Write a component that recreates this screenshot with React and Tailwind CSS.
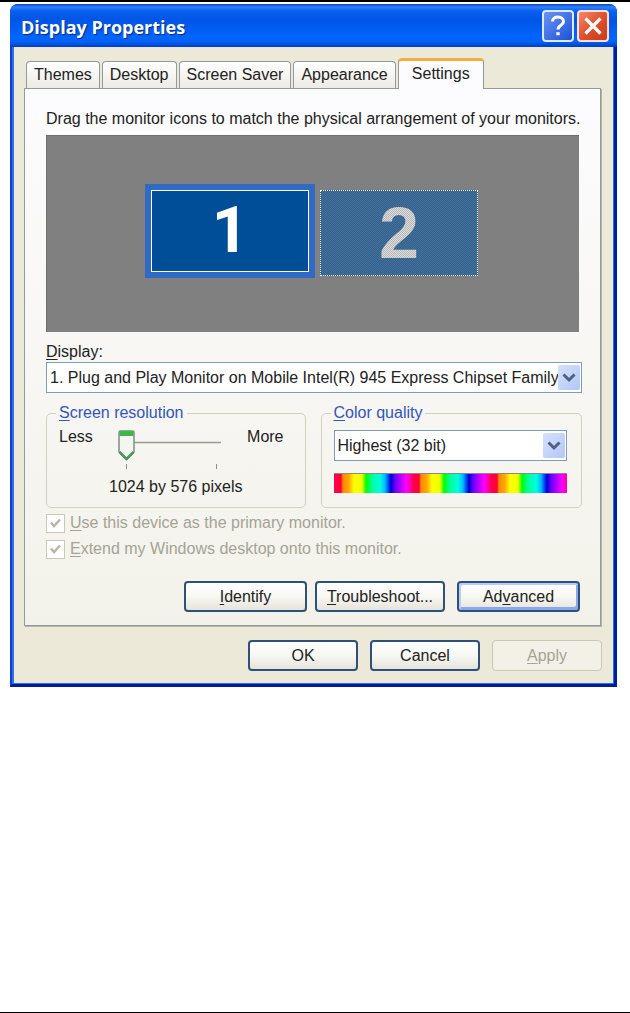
import React, { useState } from 'react'
import clsx from 'clsx'

const TABS = ['Themes', 'Desktop', 'Screen Saver', 'Appearance', 'Settings']

// Button / label text with its keyboard accelerator underlined.
function Accel({ text, at = 0 }) {
  return (
    <span>
      {text.slice(0, at)}
      <span className="underline underline-offset-2">{text[at]}</span>
      {text.slice(at + 1)}
    </span>
  )
}

function XpButton({ children, className, focused, disabled }) {
  return (
    <button
      type="button"
      disabled={disabled}
      className={clsx(
        'h-[31px] rounded-[4px] text-base leading-5',
        disabled
          ? 'border border-[#c9c7ba] bg-[#f3f1e7] text-[#a5a396]'
          : 'border-2 border-[#2f5078] bg-linear-to-b from-white via-[#f7f7f3] to-[#e6e4da] text-[#222]',
        focused && 'shadow-[inset_2px_2px_0_#bccdf5,inset_-2px_-3px_0_#8ba6ea]',
        className,
      )}
    >
      {children}
    </button>
  )
}

function XpSelect({ id, value, label, className }) {
  return (
    <div className={clsx('relative', className)}>
      <select
        id={id}
        aria-label={label}
        defaultValue={value}
        className="block h-[31px] w-full appearance-none border border-[#7f9db9] bg-white pl-[3px] pr-5 text-base text-[#222]"
      >
        <option>{value}</option>
      </select>
      <span className="pointer-events-none absolute right-[2px] top-[3px] flex h-[25px] w-[22px] items-center justify-center rounded-[2px] bg-linear-to-br from-[#d5e1fd] to-[#b3c7f5]">
        <svg width="14" height="10" viewBox="0 0 14 10" fill="none" stroke="#4d6185" strokeWidth="3">
          <path d="M1.500 1.500 7 7l5.500-5.500" />
        </svg>
      </span>
    </div>
  )
}

function XpCheckbox({ id, text }) {
  return (
    <div className="flex h-[26px] items-center gap-[5px]">
      <span className="relative h-[19px] w-[19px]">
        <input
          id={id}
          type="checkbox"
          defaultChecked
          disabled
          className="block h-[19px] w-[19px] appearance-none border border-[#cac8bb] bg-white"
        />
        <svg className="pointer-events-none absolute left-1 top-1" width="11" height="11" viewBox="0 0 11 11" fill="none" stroke="#b9b7aa" strokeWidth="2.500">
          <path d="M1 4.500 4 8l6-6.500" />
        </svg>
      </span>
      <label htmlFor={id} className="text-base leading-5 text-[#a5a396]">
        <Accel text={text} />
      </label>
    </div>
  )
}

function ResolutionSlider() {
  const [res, setRes] = useState(0)
  return (
    <div className="relative mt-1 h-[46px] w-[108px]">
      <input
        type="range"
        min="0"
        max="1"
        value={res}
        onChange={(e) => setRes(Number(e.target.value))}
        aria-label="Screen resolution"
        className="absolute inset-0 h-8 w-full opacity-0"
      />
      <svg className="pointer-events-none block" width="108" height="46" viewBox="0 0 108 46" fill="none">
        <path d="M6 13.500h99" stroke="#9d9c94" strokeWidth="1.500" />
        <path d="M10.500 35v5M100.500 35v5" stroke="#8d8c84" />
        <g transform={`translate(${2 + res * 90} 1)`}>
          <path d="M1 2.500q0-1.500 1.500-1.500h12q1.500 0 1.500 1.500V22L8.500 29.500 1 22z" fill="#f4f5f0" stroke="#7c8f88" strokeWidth="1.500" />
          <path d="M1.500 1h14v5h-14z" fill="#3fb54a" />
          <path d="M1.500 22 8.500 29l7-7" stroke="#4d9468" strokeWidth="2.500" />
        </g>
      </svg>
    </div>
  )
}

function Monitors() {
  return (
    <div className="mt-[6px] flex h-[197px] gap-[5px] border-l border-t border-[#6f6f6f] bg-[#808080] pl-[98px] pt-12">
      <div className="h-[94px] w-[170px] bg-[#316ac5] p-[6px]">
        <div className="flex h-full items-center justify-center border border-white bg-[#004e98] font-['Roboto'] font-bold text-white">
          <span className="text-[64px] leading-none">1</span>
        </div>
      </div>
      <div className="relative mt-[6px] flex h-[86px] w-[158px] items-center justify-center border border-dotted border-white bg-[#2a6299] font-bold text-[#dcdcdc]">
        <span className="text-[72px] leading-none">2</span>
        {/* every other pixel greyed out: this monitor is not in use */}
        <svg className="absolute inset-0 h-full w-full" shapeRendering="crispEdges">
          <pattern id="dither" width="2" height="2" patternUnits="userSpaceOnUse">
            <path d="M0 0h1v1H0zM1 1h1v1H1z" fill="#808080" fillOpacity="0.4" />
          </pattern>
          <rect width="100%" height="100%" fill="url(#dither)" />
        </svg>
      </div>
    </div>
  )
}

function TitleBar() {
  return (
    <header className="flex h-[43px] items-center bg-[linear-gradient(#0a3fc0_0,#2f83ff_3px,#0a5ff0_7px,#0055e5_16px,#0066ff_34px,#0060f5_38px,#003dc4_43px)] pl-[11px] pr-2 pt-px">
      <h1 className="flex-1 pt-px font-['Open_Sans'] text-lg font-bold text-white [text-shadow:1px_1px_1px_#0a2a80]">Display Properties</h1>
      <button type="button" aria-label="Help" className="mr-[3px] flex h-8 w-8 items-center justify-center rounded-[4px] border-2 border-[#dfe9ff] bg-linear-to-br from-[#6b93f5] to-[#1c50d8]">
        <svg width="16" height="22" viewBox="0 0 16 22" fill="none" stroke="#fff" strokeWidth="3">
          <path d="M2.500 6.500C2.500 3.500 5 2 8 2s5.500 1.700 5.500 4.500c0 4-5.500 3.500-5.500 8" />
          <path d="M6.300 18.700h3.400" />
        </svg>
      </button>
      <button type="button" aria-label="Close" className="flex h-8 w-8 items-center justify-center rounded-[4px] border-2 border-[#ffe0d8] bg-linear-to-br from-[#f0896b] via-[#e0502c] to-[#c63c14]">
        <svg width="18" height="18" viewBox="0 0 18 18" stroke="#fff" strokeWidth="3.200">
          <path d="M1.500 1.500l15 15M16.500 1.500l-15 15" />
        </svg>
      </button>
    </header>
  )
}

export default function App() {
  return (
    <div className="flex min-h-screen flex-col border-b border-t-2 border-black bg-white pl-[10px] pr-[13px] pt-[2px] font-['Liberation_Sans',sans-serif] text-base leading-5 text-[#222]">
      <main className="overflow-hidden rounded-t-[8px] bg-[#0a3fd0]">
        <TitleBar />
        <div className="border-b-[3px] border-l-2 border-r-[3px] border-b-[#001c9c] border-l-[#0a3fd0] border-r-[#001c9c]">
          <div className="border-b border-l-2 border-r border-[#2f6fe8] bg-[#ece9d8] pb-[12px] pl-[10px] pr-[12px] pt-[11px]">
            <div role="tablist" className="flex h-[30px] items-end pl-[2px]">
              {TABS.map((tab) =>
                tab === 'Settings' ? (
                  <button key={tab} type="button" role="tab" aria-selected="true" className="relative z-10 -mb-px h-[31px] w-[86px] rounded-t-[4px] border-x border-t-[3px] border-x-[#919b9c] border-t-[#f0b040] bg-[#fcfcfe] pb-[2px]">
                    {tab}
                  </button>
                ) : (
                  <button key={tab} type="button" role="tab" aria-selected="false" className="mr-[2px] h-[27px] whitespace-nowrap rounded-t-[4px] border border-b-0 border-[#919b9c] bg-linear-to-b from-white to-[#ecebe4] px-[7px]">
                    {tab}
                  </button>
                ),
              )}
            </div>

            <section role="tabpanel" className="border border-[#919b9c] bg-linear-to-b from-[#fcfcfe] to-[#f3f2ea] pb-[13px] pl-[21px] pr-[18px] pt-5 shadow-[1px_1px_0_#b8b5a5]">
              <p className="whitespace-nowrap">Drag the monitor icons to match the physical arrangement of your monitors.</p>
              <div className="mr-[3px]">
                <Monitors />
              </div>

              <label htmlFor="display" className="mt-[10px] block">
                <Accel text="Display:" />
              </label>
              <XpSelect id="display" value="1. Plug and Play Monitor on Mobile Intel(R) 945 Express Chipset Family" />

              <div className="mt-[10px] flex gap-[15px]">
                <fieldset className="h-[105px] flex-1 rounded-[5px] border border-[#d0d0bf] px-3">
                  <legend className="-ml-[3px] px-[3px] leading-5 text-[#3355bb]">
                    <Accel text="Screen resolution" />
                  </legend>
                  <div className="flex justify-between pr-[9px] pt-[2px]">
                    <span className="pt-[2px]">Less</span>
                    <ResolutionSlider />
                    <span className="pt-[2px]">More</span>
                  </div>
                  <p className="pt-[2px] text-center">1024 by 576 pixels</p>
                </fieldset>
                <fieldset className="h-[105px] flex-1 rounded-[5px] border border-[#d0d0bf] pl-3 pr-[14px]">
                  <legend className="-ml-[3px] px-[3px] leading-5 text-[#3355bb]">
                    <Accel text="Color quality" />
                  </legend>
                  <XpSelect label="Color quality" value="Highest (32 bit)" className="mt-[7px]" />
                  <div className="mt-3 h-5 border-t border-[#888] bg-[repeating-linear-gradient(90deg,#ff0055_0,#ff0033_7px,#ff8800_9px,#ffaa00_15px,#ffff00_20px,#eeff00_28px,#00ff00_32px,#00ff99_38px,#00ffdd_46px,#00bbff_51px,#0055ff_54px,#0000cc_57px,#6600ff_61px,#aa00ff_66px,#ff00ff_72px,#ff0088_78px)]" />
                </fieldset>
              </div>

              <div className="mt-[2px]">
                <XpCheckbox id="primary" text="Use this device as the primary monitor." />
                <XpCheckbox id="extend" text="Extend my Windows desktop onto this monitor." />
              </div>

              <div className="mt-[19px] flex justify-end pr-[2px]">
                <XpButton className="mr-2 w-[123px]"><Accel text="Identify" /></XpButton>
                <XpButton className="mr-3 w-[130px]"><Accel text="Troubleshoot..." /></XpButton>
                <XpButton className="w-[123px]" focused><Accel text="Advanced" at={2} /></XpButton>
              </div>
            </section>

            <footer className="-mr-px mt-[14px] flex justify-end gap-3">
              <XpButton className="w-[110px]">OK</XpButton>
              <XpButton className="w-[110px]">Cancel</XpButton>
              <XpButton className="w-[110px]" disabled><Accel text="Apply" /></XpButton>
            </footer>
          </div>
        </div>
      </main>
    </div>
  )
}
